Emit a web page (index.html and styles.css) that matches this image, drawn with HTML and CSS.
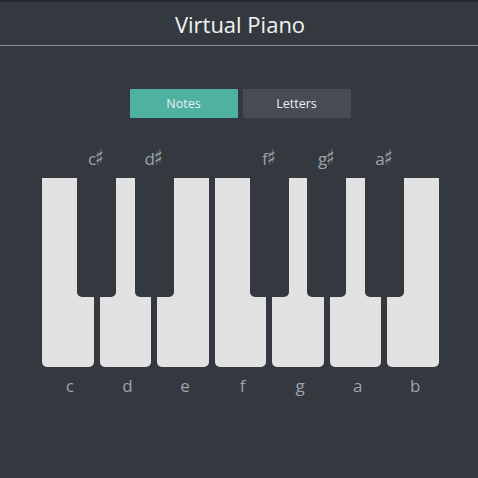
FILE: index.html
```html
<!DOCTYPE html>
<html>
<head>
<meta charset="utf-8">
<link rel="stylesheet" href="styles.css">
</head>
<body>
<header class="header"><h1 class="title">Virtual Piano</h1></header>
<div class="toggle">
  <button class="btn btn-active">Notes</button>
  <button class="btn">Letters</button>
</div>
<div class="piano">
  <div class="keys">
    <div class="white"><span class="wlabel">c</span></div>
    <div class="white"><span class="wlabel">d</span></div>
    <div class="white"><span class="wlabel">e</span></div>
    <div class="white"><span class="wlabel">f</span></div>
    <div class="white"><span class="wlabel">g</span></div>
    <div class="white"><span class="wlabel">a</span></div>
    <div class="white"><span class="wlabel">b</span></div>
    <div class="black b1"><span class="blabel">c<span class="sharp">♯</span></span></div>
    <div class="black b2"><span class="blabel">d<span class="sharp">♯</span></span></div>
    <div class="black b4"><span class="blabel">f<span class="sharp">♯</span></span></div>
    <div class="black b5"><span class="blabel">g<span class="sharp">♯</span></span></div>
    <div class="black b6"><span class="blabel">a<span class="sharp">♯</span></span></div>
  </div>
</div>
</body>
</html>
```
FILE: styles.css
```css
html, body {
  margin: 0;
  padding: 0;
  background: #343940;
  font-family: "Open Sans", "DejaVu Sans", sans-serif;
  height: 100%;
}
body {
  border-top: 2px solid #26292d;
}
.header {
  height: 43px;
  border-bottom: 1px solid #8a8e95;
  display: flex;
  align-items: center;
  justify-content: center;
}
.title {
  margin: 0;
  font-weight: 400;
  font-size: 22px;
  color: #f2f3f4;
  line-height: 1;
  padding-left: 2px;
}
.toggle {
  display: flex;
  justify-content: center;
  gap: 5px;
  margin-top: 43px;
  padding-left: 2px;
}
.btn {
  width: 108px;
  height: 29px;
  border: none;
  border-radius: 1px;
  background: #474b53;
  color: #eceef0;
  font-family: "Open Sans", sans-serif;
  font-size: 12.5px;
  padding: 0;
}
.btn-active {
  background: #4fb2a0;
}
.piano {
  margin-top: 60px;
  padding-left: 42px;
}
.keys {
  position: relative;
  width: 397px;
  height: 189px;
  display: flex;
  gap: 6px;
}
.white {
  flex: 1;
  background: #e2e2e2;
  border-radius: 0 0 5px 5px;
  position: relative;
}
.wlabel {
  position: absolute;
  top: 196px;
  left: 0;
  right: 0;
  text-align: center;
  color: #9fa3a9;
  font-size: 17px;
  line-height: 24px;
  padding-left: 4px;
}
.black {
  position: absolute;
  top: 0;
  width: 39px;
  height: 119px;
  background: #343940;
  border-radius: 0 0 5px 5px;
}
.b1 { left: 35px; }
.b2 { left: 92.6px; }
.b4 { left: 207.8px; }
.b5 { left: 265.4px; }
.b6 { left: 322.9px; }
.blabel {
  position: absolute;
  top: -31px;
  left: 0;
  right: 0;
  text-align: center;
  color: #9fa3a9;
  font-size: 17px;
  line-height: 24px;
  white-space: nowrap;
}
.sharp {
  font-family: "DejaVu Sans", sans-serif;
  font-size: 22px;
  line-height: 20px;
  display: inline-block;
  transform: scaleX(0.8);
  margin-left: -2px;
}
```
